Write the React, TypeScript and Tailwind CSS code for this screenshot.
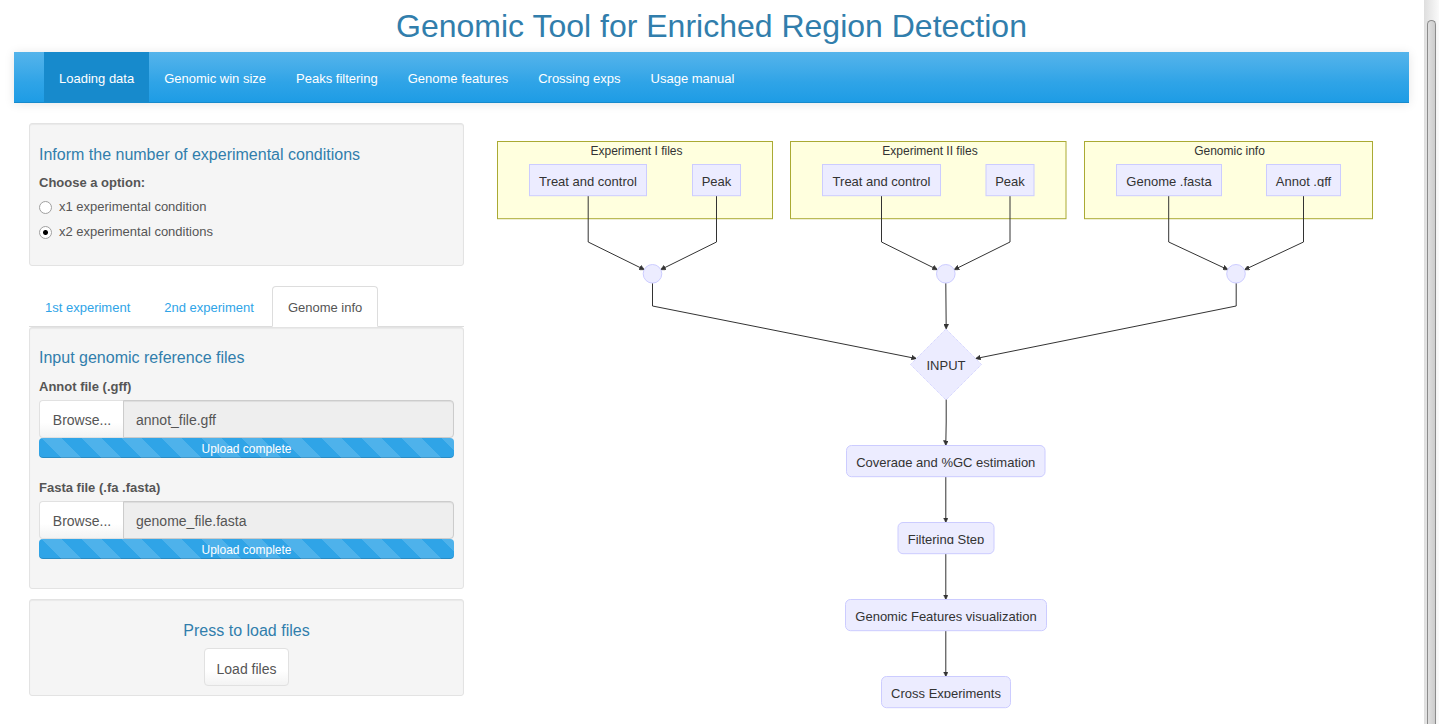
import React, { useState } from "react";

const navItems = [
  "Loading data",
  "Genomic win size",
  "Peaks filtering",
  "Genome features",
  "Crossing exps",
  "Usage manual",
];

const tabs = ["1st experiment", "2nd experiment", "Genome info"];

function Well({ className = "", children }: { className?: string; children: React.ReactNode }) {
  return (
    <section
      className={`rounded-[3px] border border-[#e3e3e3] bg-[#f5f5f5] px-[9px] shadow-[inset_0_1px_1px_rgba(0,0,0,0.05)] ${className}`}
    >
      {children}
    </section>
  );
}

function Heading({ children }: { children: React.ReactNode }) {
  return <h2 className="text-[16px] leading-[22px] text-[#317eac]">{children}</h2>;
}

function FileField({ id, label, file }: { id: string; label: string; file: string }) {
  return (
    <div>
      <label htmlFor={id} className="block text-[13px] leading-[18px] font-bold">
        {label}
      </label>
      <div className="mt-1 flex h-[38px] text-[14px]">
        <label className="flex w-[85px] shrink-0 cursor-pointer items-center justify-center rounded-l-[4px] border border-r-0 border-[#e1e1e1] bg-linear-to-b from-white from-60% to-[#f3f3f3] pt-[2px]">
          Browse...
          <input type="file" id={id} className="sr-only" />
        </label>
        <input
          type="text"
          readOnly
          aria-label={`${label} name`}
          defaultValue={file}
          className="-ml-px min-w-0 flex-1 rounded-r-[4px] border border-[#cccccc] bg-[#eeeeee] px-3 pt-[2px] shadow-[inset_0_1px_1px_rgba(0,0,0,0.075)] outline-none"
        />
      </div>
      <div
        role="progressbar"
        aria-label={`${label} upload`}
        aria-valuenow={100}
        className="h-5 rounded-[4px] bg-[#2fa4e7] bg-[linear-gradient(45deg,rgba(255,255,255,0.15)_25%,transparent_25%,transparent_50%,rgba(255,255,255,0.15)_50%,rgba(255,255,255,0.15)_75%,transparent_75%,transparent)] bg-[length:40px_40px] bg-position-[3px_0] text-center text-[12px] leading-[22px] text-white shadow-[inset_0_-1px_0_rgba(0,0,0,0.15)]"
      >
        Upload complete
      </div>
    </div>
  );
}

const groups = [
  { title: "Experiment I files", x: 497.5, w: 275, cx: 636.5 },
  { title: "Experiment II files", x: 790.5, w: 275.5, cx: 930 },
  { title: "Genomic info", x: 1084.5, w: 288, cx: 1229.5 },
];

const nodes = [
  { text: "Treat and control", x: 529.5, y: 164.5, w: 117, r: 0, clip: 187 },
  { text: "Peak", x: 692.5, y: 164.5, w: 48, r: 0, clip: 187 },
  { text: "Treat and control", x: 822.5, y: 164.5, w: 118, r: 0, clip: 187 },
  { text: "Peak", x: 986, y: 164.5, w: 48, r: 0, clip: 187 },
  { text: "Genome .fasta", x: 1116.5, y: 164.5, w: 105, r: 0, clip: 187 },
  { text: "Annot .gff", x: 1266.5, y: 164.5, w: 74, r: 0, clip: 187 },
  { text: "Coverage and %GC estimation", x: 846.5, y: 445.5, w: 198.5, r: 5, clip: 467 },
  { text: "Filtering Step", x: 898, y: 522.5, w: 96, r: 5, clip: 544 },
  { text: "Genomic Features visualization", x: 845.5, y: 599.5, w: 201, r: 5, clip: 621 },
  { text: "Cross Experiments", x: 881.5, y: 676.5, w: 129, r: 5, clip: 698 },
];

const joints = [652.5, 945.8, 1236];

const edges = [
  "M588.2 196V242L644 269.5",
  "M716.5 196V242L661 269.5",
  "M881.5 196V242L937 269.5",
  "M1010 196V242L954.5 269.5",
  "M1168.7 196V242L1227.5 269.5",
  "M1303.5 196V242L1245 269.5",
  "M652.5 283V306L916 358.5",
  "M945.8 283L946.2 328.5",
  "M1236.2 283V306L976 358.5",
  "M946.2 399V422L945.8 445",
  "M945.8 477V522",
  "M945.8 554V599",
  "M945.8 631V676",
];

function Workflow() {
  return (
    <svg
      viewBox="494 123 900 600"
      width="900"
      height="600"
      role="img"
      aria-label="Workflow diagram"
      className="block shrink-0 font-['Liberation_Sans',Arial,sans-serif]"
    >
      <defs>
        <marker id="arrow" viewBox="0 0 10 10" refX="9" refY="5" markerWidth="5" markerHeight="5" markerUnits="userSpaceOnUse" orient="auto">
          <path d="M0 0L10 5L0 10z" fill="#333" stroke="#333" strokeWidth="1" />
        </marker>
        {nodes.map((n, i) => (
          <clipPath id={`label-${i}`} key={i}>
            <rect x={n.x} y={n.y} width={n.w} height={n.clip - n.y} />
          </clipPath>
        ))}
      </defs>
      {groups.map((g) => (
        <g key={g.title}>
          <rect x={g.x} y="141.5" width={g.w} height="77.2" fill="#ffffde" stroke="#aaaa33" />
          <text x={g.cx} y="155" textAnchor="middle" fontSize="12" fill="#333">
            {g.title}
          </text>
        </g>
      ))}
      {edges.map((d) => (
        <path key={d} d={d} fill="none" stroke="#333" strokeWidth="1" markerEnd="url(#arrow)" />
      ))}
      {joints.map((x) => (
        <circle key={x} cx={x} cy="273.8" r="9.3" fill="#ececff" stroke="#ccccff" />
      ))}
      <path d="M946 329L981.5 364.5L946 400L910.5 364.5z" fill="#ececff" stroke="#ccccff" strokeDasharray="1 1" />
      <text x="946" y="370" textAnchor="middle" fontSize="13" fill="#333">
        INPUT
      </text>
      {nodes.map((n, i) => (
        <g key={i}>
          <rect x={n.x} y={n.y} width={n.w} height="31.2" rx={n.r} fill="#ececff" stroke="#ccccff" />
          <text
            x={n.x + n.w / 2}
            y={n.y + 21.5}
            textAnchor="middle"
            fontSize="13"
            fill="#333"
            clipPath={`url(#label-${i})`}
          >
            {n.text}
          </text>
        </g>
      ))}
    </svg>
  );
}

export default function App() {
  const [condition, setCondition] = useState(2);
  const [nav, setNav] = useState(0);
  const [tab, setTab] = useState(2);

  return (
    <div className="flex min-h-screen bg-white font-['Liberation_Sans',Arial,sans-serif] text-[13px] text-[#555555]">
      <div className="min-w-0 flex-1 pr-[15px] pl-[14px]">
        <h1 className="h-[52px] text-center text-[32px] leading-[52px] text-[#317eac]">
          Genomic Tool for Enriched Region Detection
        </h1>
        <nav className="flex h-[51px] border-b border-[#178acc] bg-linear-to-b from-[#54b4eb] via-[#2fa4e7] via-60% to-[#1d9ce5] px-[30px] text-white shadow-[0_1px_10px_rgba(0,0,0,0.1)]">
          {navItems.map((item, i) => (
            <a
              key={item}
              href="#"
              onClick={() => setNav(i)}
              className={`h-[50px] px-[15px] leading-[54px] whitespace-nowrap ${i === nav ? "bg-[#178acc]" : ""}`}
            >
              {item}
            </a>
          ))}
        </nav>

        <div className="flex pt-5">
          <div className="w-1/3 px-[15px]">
            <Well className="h-[143px] pt-5">
              <Heading>Inform the number of experimental conditions</Heading>
              <fieldset>
                <legend className="pt-2 pb-[2px] text-[13px] leading-[18px] font-bold">Choose a option:</legend>
                {["x1 experimental condition", "x2 experimental conditions"].map((text, i) => (
                  <label key={text} className="flex h-[25px] items-center gap-[7px]">
                    <input
                      type="radio"
                      name="conditions"
                      checked={condition === i + 1}
                      onChange={() => setCondition(i + 1)}
                      className="mt-[2px] size-[13px] appearance-none rounded-full border border-[#a0a0a0] bg-white checked:bg-[radial-gradient(circle,#000_0_2px,#fff_3px)]"
                    />
                    {text}
                  </label>
                ))}
              </fieldset>
            </Well>

            <div role="tablist" className="mt-5 flex h-[41px] gap-[2px] border-b border-[#dddddd]">
              {tabs.map((name, i) => (
                <button
                  key={name}
                  type="button"
                  role="tab"
                  aria-selected={i === tab}
                  onClick={() => setTab(i)}
                  className={`-mb-px rounded-t-[4px] border px-[15px] pt-[2px] whitespace-nowrap ${
                    i === tab
                      ? "border-[#dddddd] border-b-white bg-white text-[#555555]"
                      : "border-transparent text-[#2fa4e7]"
                  }`}
                >
                  {name}
                </button>
              ))}
            </div>

            <Well className="pt-[19px] pb-[29px]">
              <Heading>Input genomic reference files</Heading>
              <div className="mt-[9px] flex flex-col gap-[21px]">
                <FileField id="annot" label="Annot file (.gff)" file="annot_file.gff" />
                <FileField id="fasta" label="Fasta file (.fa .fasta)" file="genome_file.fasta" />
              </div>
            </Well>

            <Well className="mt-[10px] flex flex-col items-center pt-5 pb-[9px]">
              <Heading>Press to load files</Heading>
              <button
                type="button"
                className="mt-[6px] h-[38px] rounded-[4px] border border-[#e1e1e1] bg-linear-to-b from-white from-60% to-[#f3f3f3] px-3 pt-1 text-[14px]"
              >
                Load files
              </button>
            </Well>
          </div>

          <div className="flex w-2/3 justify-center">
            <Workflow />
          </div>
        </div>
      </div>

      <div aria-hidden="true" className="w-[15px] shrink-0 bg-linear-to-r from-[#dedede] to-[#fafafa] pt-5 pr-[3px] pl-[3px]">
        <div className="h-full rounded-t-[5px] border border-b-0 border-[#8c8c8c] bg-linear-to-r from-[#e0e0e0] to-[#cccccc]" />
      </div>
    </div>
  );
}
